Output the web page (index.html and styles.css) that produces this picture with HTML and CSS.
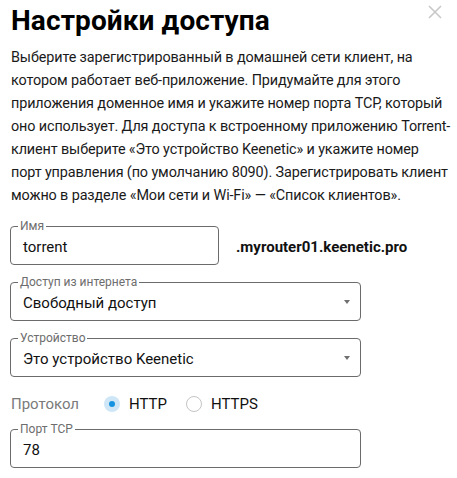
FILE: index.html
```html
<!DOCTYPE html>
<html lang="ru">
<head>
<meta charset="utf-8">
<link rel="stylesheet" href="styles.css">
</head>
<body>
<div class="dialog">
  <button class="close" aria-label="Закрыть">
    <svg width="14" height="14" viewBox="0 0 14 14"><path d="M1 1L13 13M13 1L1 13" stroke="#c8c8c8" stroke-width="1.6" fill="none"/></svg>
  </button>
  <h1 class="title">Настройки доступа</h1>
  <p class="desc">Выберите зарегистрированный в домашней сети клиент, на<br>котором работает веб-приложение. Придумайте для этого<br>приложения доменное имя и укажите номер порта TCP, который<br>оно использует. Для доступа к встроенному приложению Torrent-<br>клиент выберите «Это устройство Keenetic» и укажите номер<br>порт управления (по умолчанию 8090). Зарегистрировать клиент<br>можно в разделе «Мои сети и Wi-Fi» — «Список клиентов».</p>

  <div class="form">
    <div class="row">
      <div class="field field-short">
        <span class="label">Имя</span>
        <span class="value">torrent</span>
      </div>
      <span class="domain">.myrouter01.keenetic.pro</span>
    </div>

    <div class="field field-wide">
      <span class="label">Доступ из интернета</span>
      <span class="value">Свободный доступ</span>
      <span class="arrow"></span>
    </div>

    <div class="field field-wide">
      <span class="label">Устройство</span>
      <span class="value">Это устройство Keenetic</span>
      <span class="arrow"></span>
    </div>

    <div class="protocol">
      <span class="proto-label">Протокол</span>
      <span class="radio checked"><span class="dot"></span></span>
      <span class="radio-text">HTTP</span>
      <span class="radio"></span>
      <span class="radio-text">HTTPS</span>
    </div>

    <div class="field field-wide">
      <span class="label">Порт TCP</span>
      <span class="value">78</span>
    </div>
  </div>
</div>
</body>
</html>
```

FILE: styles.css
```css
* { box-sizing: border-box; }
html, body {
  margin: 0;
  padding: 0;
  background: #fff;
}
body {
  font-family: Roboto, "Noto Sans", sans-serif;
  color: #1a1a1a;
}
.dialog {
  position: relative;
  padding: 0 0 0 11px;
  width: 457px;
  height: 478px;
  overflow: hidden;
}
.close {
  position: absolute;
  top: 5px;
  right: 15px;
  width: 14px;
  height: 14px;
  padding: 0;
  border: 0;
  background: none;
  display: block;
}
.close svg { display: block; }
.title {
  margin: 0;
  font-size: 28px;
  font-weight: 700;
  line-height: 42px;
  color: #000;
  letter-spacing: 0.1px;
}
.desc {
  margin: 4px 0 0;
  font-size: 14.4px;
  line-height: 23px;
  color: #1a1a1a;
  white-space: nowrap;
  letter-spacing: -0.12px;
}
.form {
  margin-top: 19px;
  display: flex;
  flex-direction: column;
  gap: 17px;
  margin-left: -1px;
}
.row {
  display: flex;
  align-items: center;
  gap: 17px;
}
.field {
  position: relative;
  height: 39px;
  border: 1px solid #6b6b6b;
  border-radius: 4px;
  padding: 10px 12px 0;
  display: flex;
  align-items: flex-start;
}
.field-short { width: 209px; }
.field-wide { width: 351px; }
.label {
  position: absolute;
  top: -9px;
  left: 7px;
  padding: 0 2px;
  background: #fff;
  font-size: 12px;
  line-height: 16px;
  color: #6d6d6d;
}
.value {
  font-size: 15px;
  line-height: 20px;
  color: #111;
}
.domain {
  font-size: 15px;
  font-weight: 700;
  color: #111;
  padding-top: 2px;
}
.arrow {
  position: absolute;
  right: 10px;
  top: 17px;
  width: 0;
  height: 0;
  border-left: 3.5px solid transparent;
  border-right: 3.5px solid transparent;
  border-top: 4px solid #707070;
}
.protocol {
  display: flex;
  align-items: center;
  height: 20px;
  margin-bottom: -2px;
  font-size: 15px;
  padding-left: 1px;
}
.proto-label {
  color: #7a7a7a;
  width: 93px;
}
.radio {
  width: 16px;
  height: 16px;
  border-radius: 50%;
  border: 1px solid #c4c4c4;
  display: flex;
  align-items: center;
  justify-content: center;
  margin-right: 9px;
}
.radio.checked {
  border: 0;
  background: #cfe6f7;
}
.dot {
  width: 6px;
  height: 6px;
  border-radius: 50%;
  background: #1592e0;
}
.radio-text {
  color: #111;
  margin-right: 19px;
}
```
